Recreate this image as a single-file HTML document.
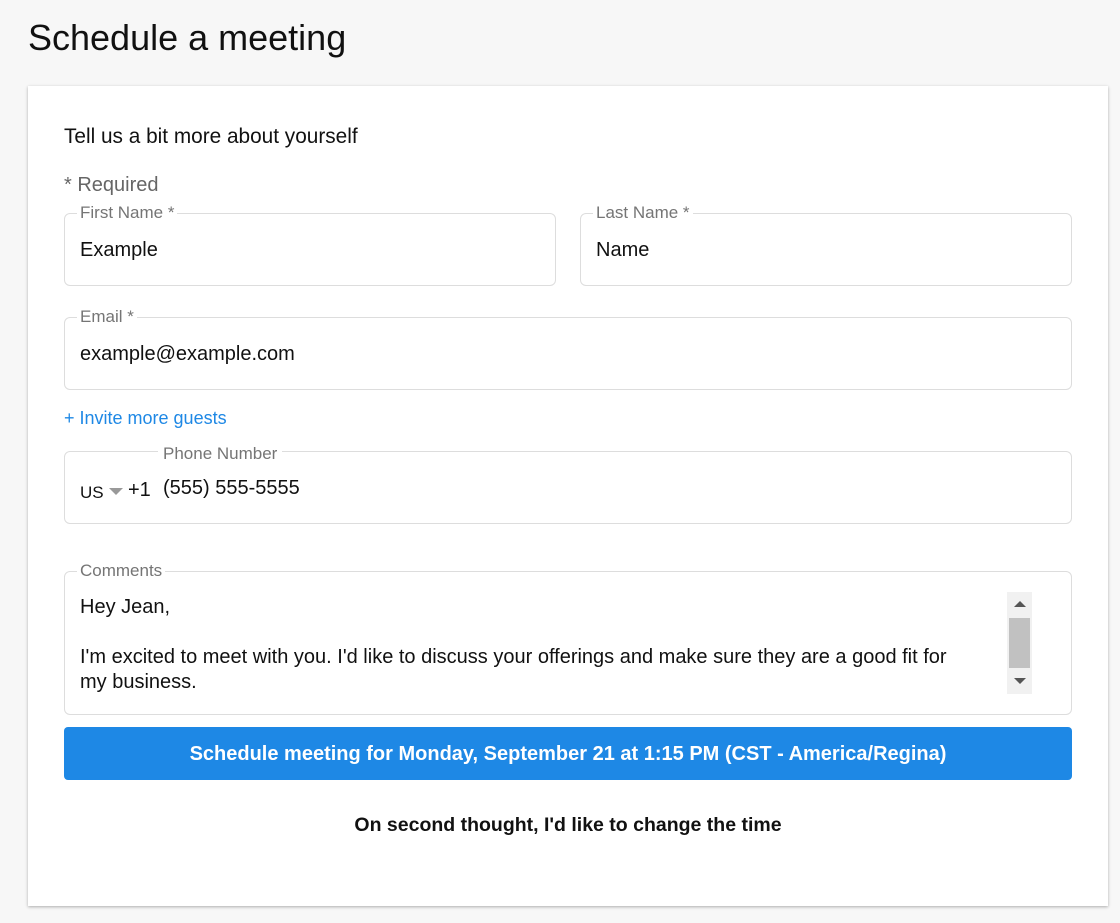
<!DOCTYPE html>
<html><head><style>
*{box-sizing:border-box}
body{margin:0;width:1120px;height:923px;background:#f7f7f7;font-family:"Liberation Sans",Arial,sans-serif;position:relative;overflow:hidden}
h1{position:absolute;left:28px;top:17px;margin:0;font-weight:400;font-size:36px;color:#111}
.card{position:absolute;left:28px;top:86px;width:1080px;height:820px;background:#fff;box-shadow:0 1px 3px rgba(0,0,0,.3)}
.t{position:absolute;font-size:20px;color:#111;white-space:nowrap}
fieldset{position:absolute;margin:0;padding:0 12px;border:1px solid #ddd;border-radius:6px}
legend{font-size:17px;color:#757575;padding:0 3px;margin-left:0;line-height:18px}
.v{position:absolute;font-size:20px;color:#111;white-space:nowrap}
</style></head><body>
<h1>Schedule a meeting</h1>
<div class="card"></div>
<div class="t" style="left:64px;top:125px;font-size:20.8px">Tell us a bit more about yourself</div>
<div class="t" style="left:64px;top:174px;color:#666">* Required</div>

<fieldset style="left:64px;top:204px;width:492px;height:82px"><legend>First Name *</legend></fieldset>
<div class="v" style="left:80px;top:239px">Example</div>
<fieldset style="left:580px;top:204px;width:492px;height:82px"><legend>Last Name *</legend></fieldset>
<div class="v" style="left:596px;top:239px">Name</div>

<fieldset style="left:64px;top:308px;width:1008px;height:82px"><legend>Email *</legend></fieldset>
<div class="v" style="left:80px;top:343px">example@example.com</div>

<div class="t" style="left:64px;top:408px;font-size:18px;color:#1e88e5">+ Invite more guests</div>

<div style="position:absolute;left:64px;top:451px;width:1008px;height:73px;border:1px solid #ddd;border-radius:6px"></div>
<div style="position:absolute;left:158px;top:444px;background:#fff;padding:0 5px;font-size:17px;color:#757575">Phone Number</div>
<div class="v" style="left:80px;top:483px;font-size:17px">US</div>
<div style="position:absolute;left:109px;top:488px;width:0;height:0;border-left:7px solid transparent;border-right:7px solid transparent;border-top:7px solid #999"></div>
<div class="v" style="left:128px;top:479px">+1</div>
<div class="v" style="left:163px;top:477px">(555) 555-5555</div>

<fieldset style="left:64px;top:562px;width:1008px;height:153px"><legend>Comments</legend></fieldset>
<div class="v" style="left:80px;top:595px;line-height:25px;white-space:normal;width:885px">Hey Jean,<br><br>I'm excited to meet with you. I'd like to discuss your offerings and make sure they are a good fit for my business.</div>
<div style="position:absolute;left:1007px;top:592px;width:25px;height:102px;background:#f1f1f1"></div>
<div style="position:absolute;left:1009px;top:618px;width:21px;height:50px;background:#c1c1c1"></div>
<div style="position:absolute;left:1014px;top:601px;border-left:6px solid transparent;border-right:6px solid transparent;border-bottom:6px solid #555"></div>
<div style="position:absolute;left:1014px;top:678px;border-left:6px solid transparent;border-right:6px solid transparent;border-top:6px solid #555"></div>

<div style="position:absolute;left:64px;top:727px;width:1008px;height:53px;background:#1e88e5;border-radius:4px;color:#fff;font-weight:700;font-size:20px;text-align:center;line-height:54px">Schedule meeting for Monday, September 21 at 1:15 PM (CST - America/Regina)</div>
<div style="position:absolute;left:64px;top:814px;width:1008px;text-align:center;font-size:19.5px;font-weight:700;color:#111">On second thought, I'd like to change the time</div>
</body></html>
